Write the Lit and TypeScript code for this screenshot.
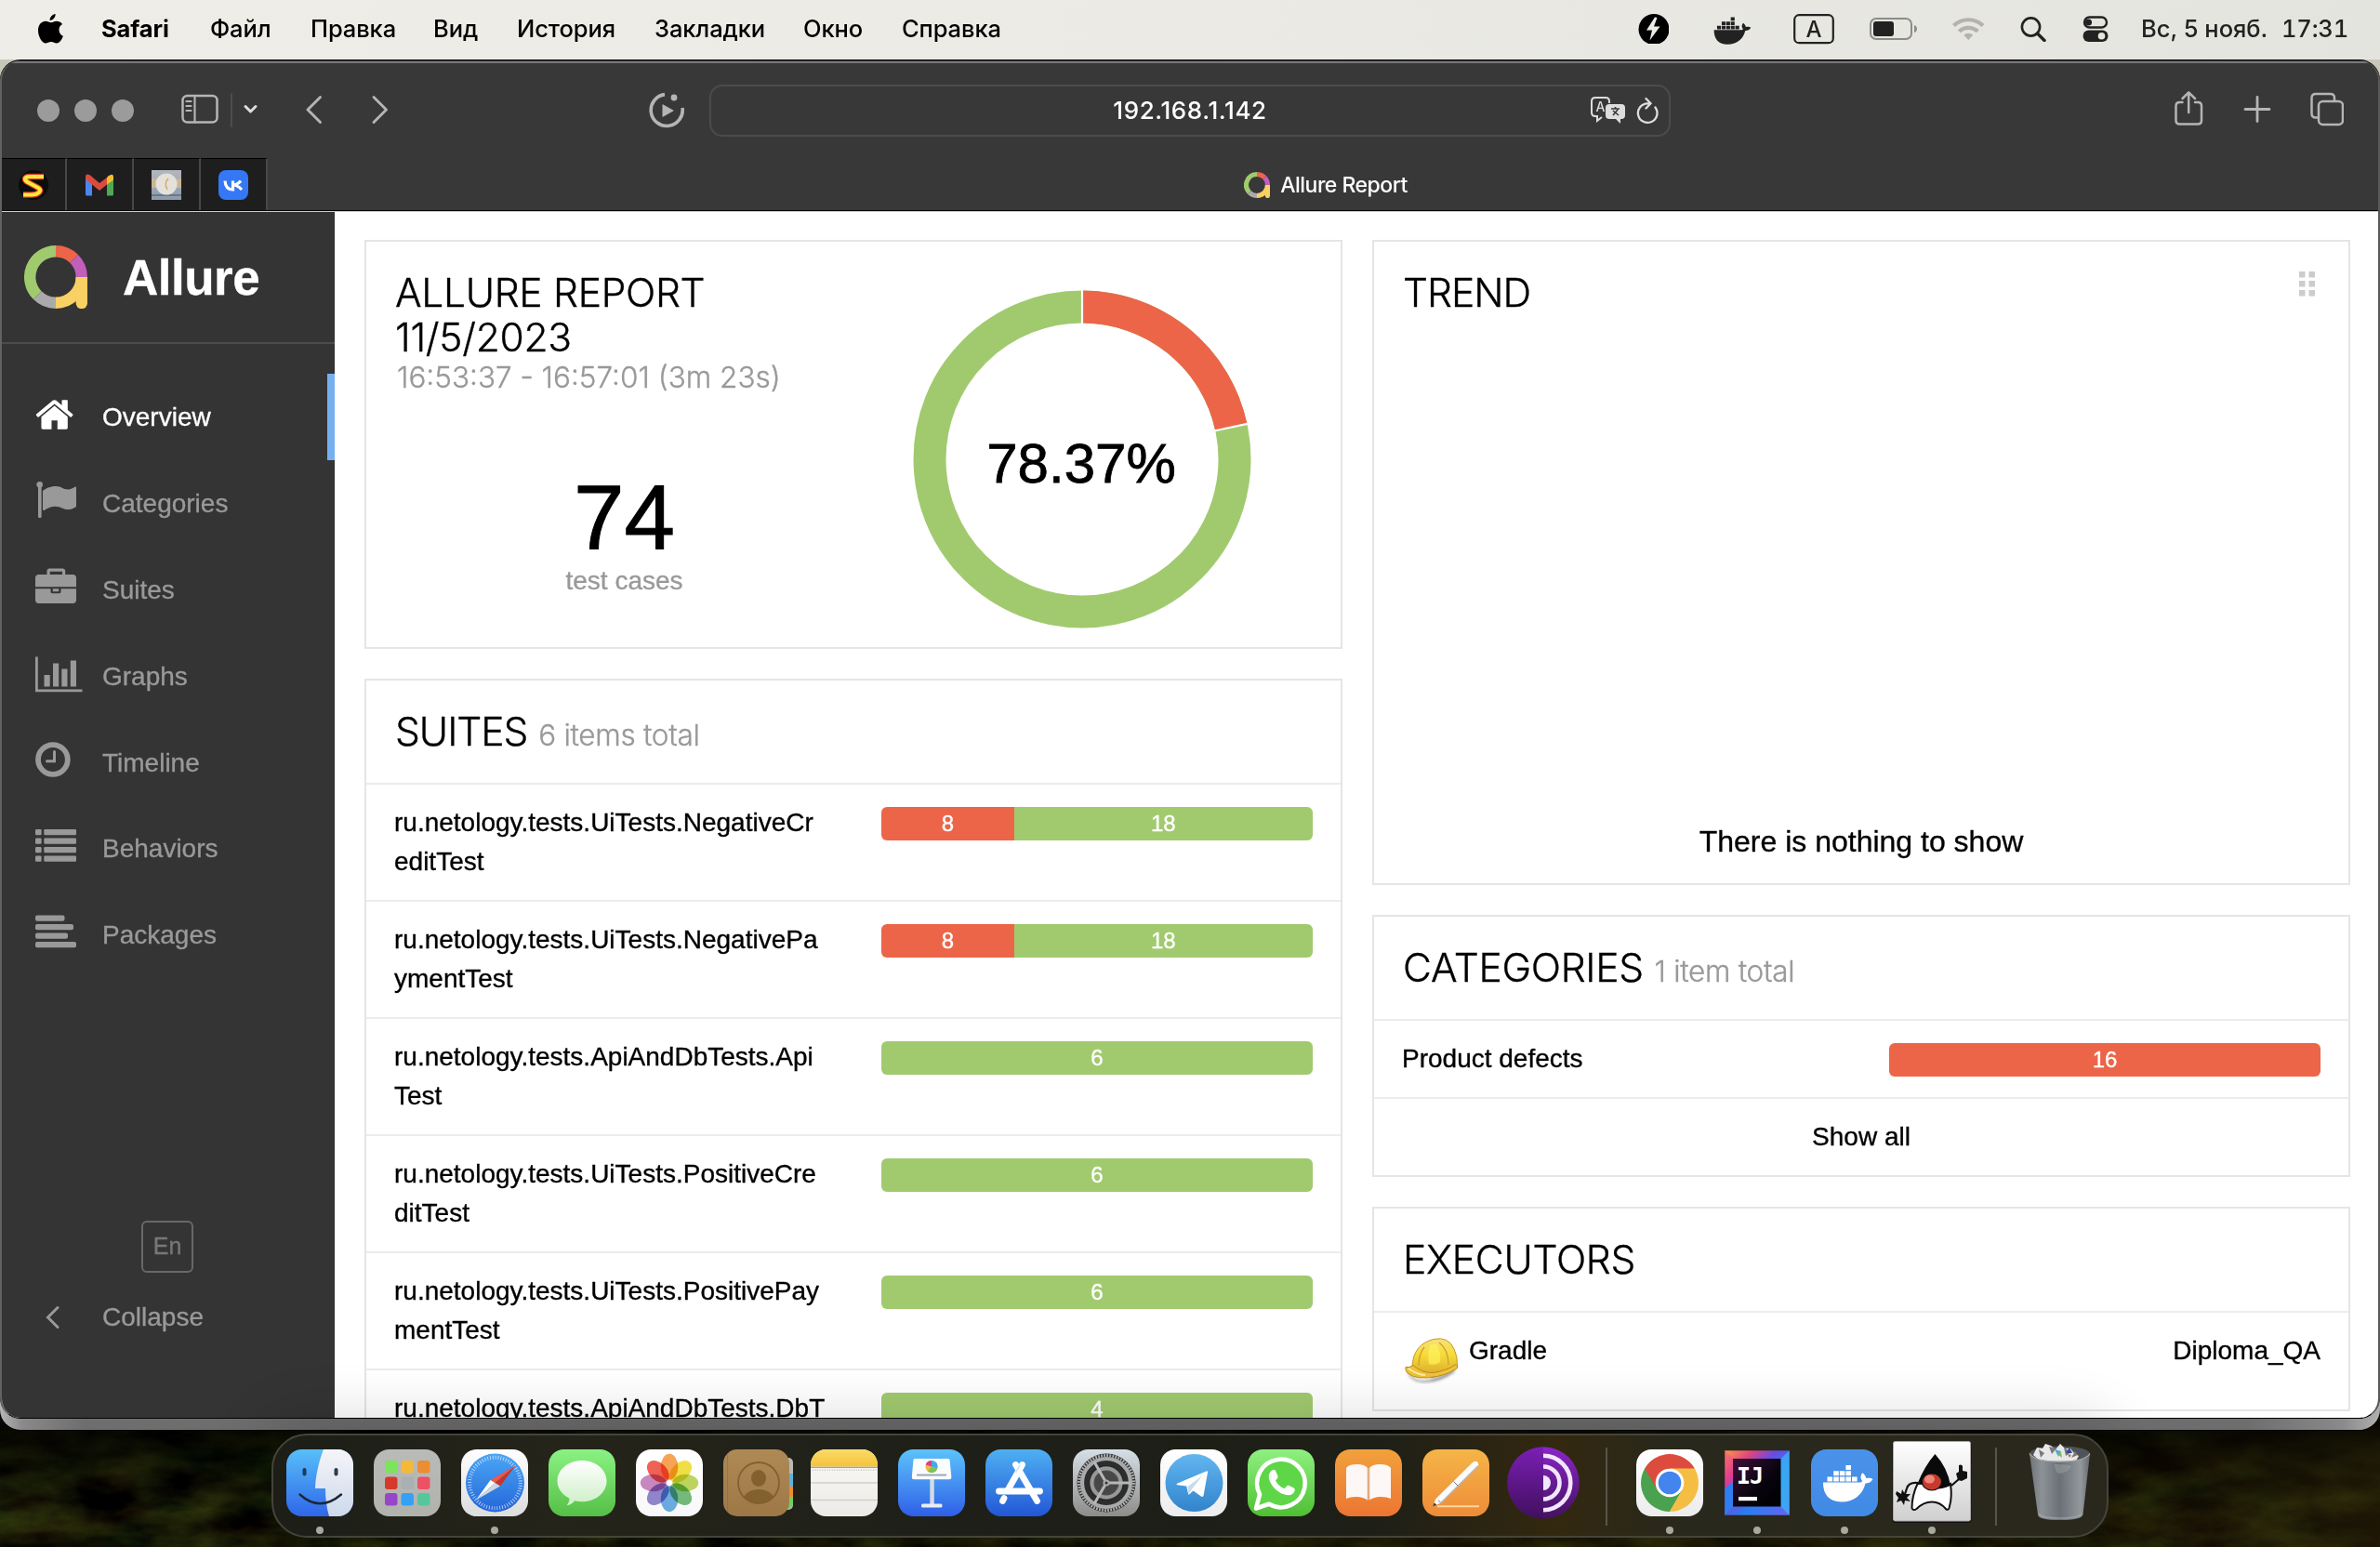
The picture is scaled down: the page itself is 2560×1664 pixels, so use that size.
import { LitElement, html, css, svg, TemplateResult } from "lit";
import { customElement } from "lit/decorators.js";

interface Suite {
  lines: string[];
  failed: number;
  passed: number;
}

const MENU = ["Файл", "Правка", "Вид", "История", "Закладки", "Окно", "Справка"];

const SUITES: Suite[] = [
  { lines: ["ru.netology.tests.UiTests.NegativeCr", "editTest"], failed: 8, passed: 18 },
  { lines: ["ru.netology.tests.UiTests.NegativePa", "ymentTest"], failed: 8, passed: 18 },
  { lines: ["ru.netology.tests.ApiAndDbTests.Api", "Test"], failed: 0, passed: 6 },
  { lines: ["ru.netology.tests.UiTests.PositiveCre", "ditTest"], failed: 0, passed: 6 },
  { lines: ["ru.netology.tests.UiTests.PositivePay", "mentTest"], failed: 0, passed: 6 },
  { lines: ["ru.netology.tests.ApiAndDbTests.DbT"], failed: 0, passed: 4 },
];

const NAV: { label: string; icon: TemplateResult; active?: boolean }[] = [
  {
    label: "Overview",
    active: true,
    icon: svg`<g transform="translate(-1.4 -1) scale(.0246)"><path d="M1472 992v480q0 26-19 45t-45 19h-384v-384h-256v384h-384q-26 0-45-19t-19-45v-480q0-1 .5-3t.5-3l575-474 575 474q1 2 1 6zm223-69l-62 74q-8 9-21 11h-3q-13 0-21-7l-692-577-692 577q-12 8-24 7-13-2-21-11l-62-74q-8-10-7-23.5t11-21.5l719-599q32-26 76-26t76 26l244 204v-195q0-14 9-23t23-9h192q14 0 23 9t9 23v408l219 182q10 8 11 21.5t-7 23.5z"/></g>`,
  },
  {
    label: "Categories",
    icon: svg`<circle cx="4.7" cy="5.2" r="3.3"/><rect x="3" y="6" width="3.6" height="35" rx="1.2"/><path d="M8 12c3-2.500 8-5 14-5 6 0 8 3.500 13 3.500 3 0 5.500-1.600 7.500-2.700 1-.5 1.500 0 1.500.8v19.400c0 1-.4 1.300-1.200 1.700-2.400 1.200-5 2.400-8 2.400-5 0-7.500-3.400-13-3.400-5 0-9 2-12 4-1 .6-1.800.2-1.800-.8z"/>`,
  },
  {
    label: "Suites",
    icon: svg`<path d="M12.500 9V5.200C12.500 3.400 13.700 2.500 15 2.500h14.500c1.500 0 2.700 1 2.700 2.700V9h8.300c2 0 3.500 1.500 3.500 3.500v9.800H0v-9.800C0 10.500 1.500 9 3.500 9zm3.200 0h13.300V5.700H15.700zM0 24.200h16.500v3.300c0 1 .7 1.700 1.700 1.700h7.600c1 0 1.700-.7 1.700-1.700v-3.300H44v12.300c0 2-1.500 3.500-3.500 3.500h-37C1.500 40 0 38.500 0 36.500zm18.800 0h6.400v3h-6.400z"/>`,
  },
  {
    label: "Graphs",
    icon: svg`<path d="M0 4.500h2.800V39.500H50.500v2.700H0zM9.500 24h6.200v12.500H9.500zM19 11.500h6.200v25H19zM28.300 17.500h6.200v19h-6.200zM37.800 8.500H44v28h-6.200z"/>`,
  },
  {
    label: "Timeline",
    icon: svg`<circle cx="18.900" cy="22" r="15.900" fill="none" stroke="currentColor" stroke-width="5.800"/><path d="M20.500 13.500v10.300h-8" fill="none" stroke="currentColor" stroke-width="3" stroke-linecap="round"/>`,
  },
  {
    label: "Behaviors",
    icon: svg`${[4, 13.5, 23, 32.5].map(
      (y) => svg`<rect x="0" y=${y} width="6.600" height="6.300" rx="1.200"/><rect x="9.300" y=${y} width="34.700" height="6.300" rx="1.200"/>`
    )}`,
  },
  {
    label: "Packages",
    icon: svg`${[31.5, 41, 35, 44].map(
      (w, i) => svg`<rect x="0" y=${3.5 + i * 9.5} width=${w} height="6.300" rx="2"/>`
    )}`,
  },
];

const allureLogo = (size: number) => html`
  <svg width=${size} height=${size} viewBox="0 0 68 68" fill="none" stroke-width="12.400">
    <path d="M14.340 53.660A27.800 27.800 0 0 1 34 6.200" stroke="#a1ca6f" />
    <path d="M34 6.200A27.800 27.800 0 0 1 53.660 14.340" stroke="#ec6549" />
    <path d="M53.660 14.340A27.800 27.800 0 0 1 61.800 34" stroke="#c15fb9" />
    <path d="M34 61.800A27.800 27.800 0 0 1 14.340 53.660" stroke="#aaa" />
    <path d="M61.800 34A27.800 27.800 0 0 1 34 61.800" stroke="#f9d063" />
    <path d="M55.600 34H68V62a6.200 6.200 0 0 1-12.400 0z" fill="#f9d063" />
  </svg>
`;

const grad = (id: string, top: string, bottom: string) => svg`
  <linearGradient id=${id} x1="0" y1="0" x2="0" y2="1">
    <stop offset="0" stop-color=${top}/><stop offset="1" stop-color=${bottom}/>
  </linearGradient>`;

const tile = (id: string, top: string, bottom: string) => svg`
  ${grad(id, top, bottom)}<rect width="72" height="72" rx="16.500" fill="url(#${id})"/>`;

const PETALS = ["#f7973c", "#f0dc2c", "#b6d24a", "#63b36a", "#5aa3e0", "#8377c4", "#c379b8", "#ee4c3c"];
const PAD = [
  ["#7be35c", "#f5b93a", "#ec8d33"],
  ["#d6382c", "#a9afb3", "#ee5064"],
  ["#9746c9", "#36a0f5", "#56c69b"],
];

const finder = svg`${tile("fi", "#57bff8", "#2f66ea")}
  <clipPath id="fc"><rect width="72" height="72" rx="16.500"/></clipPath>
  ${grad("fr", "#f5f5f8", "#cdd9ec")}
  <g clip-path="url(#fc)"><path d="M40 0C35 13 31.500 28 31 42h11c0 10 1 20 4 30h26V0z" fill="url(#fr)"/></g>
  <rect x="17.500" y="20" width="4" height="8.500" rx="2" fill="#1c3a5c"/><rect x="51.500" y="20" width="4" height="8.500" rx="2" fill="#2c3a4c"/>
  <path d="M14.500 48.500Q36 68 59 48.500" fill="none" stroke="#1d2733" stroke-width="2.400" stroke-linecap="round"/>`;

const launchpad = svg`${tile("lp", "#b9bbb9", "#b1b2ac")}
  ${PAD.map((r, y) => r.map((c, x) => svg`<rect x=${12 + x * 17.5} y=${12 + y * 17.5} width="13.500" height="13.500" rx="3" fill=${c}/>`))}`;

const safari = svg`${tile("sa", "#ffffff", "#dcdcde")}${grad("sb", "#4ba6f5", "#2466d8")}
  <circle cx="36.500" cy="36" r="31.500" fill="url(#sb)"/>
  <circle cx="36.500" cy="36" r="27.300" fill="none" stroke="#fff" stroke-opacity=".75" stroke-width="4" stroke-dasharray=".8 2.060"/>
  <path d="M58.500 17.500L31.500 33l5 3z" fill="#f0574b"/><path d="M58.500 17.500L42 39.500l-5.500-3.500z" fill="#c5352c"/>
  <path d="M16 54.500L31.500 33l5 3z" fill="#fff"/><path d="M16 54.500L42 39.500l-5.500-3.500z" fill="#cfd6de"/>`;

const messages = svg`${tile("me", "#8af283", "#55bf46")}${grad("mb", "#ffffff", "#cdeec5")}
  <path d="M36 12c15 0 26.500 9.800 26.500 22S51 56.300 36 56.300c-2.800 0-5.500-.3-8-1-1.500 2.700-4.500 4.600-8.500 5 2-2.300 3-5 3-7.500C14.500 48.600 9.500 41.800 9.500 34 9.500 21.800 21 12 36 12z" fill="url(#mb)"/>`;

const photos = svg`${tile("ph", "#ffffff", "#f8f8fa")}
  <g class="petals">${PETALS.map((c, i) => svg`<ellipse cx="36" cy="18.800" rx="9.300" ry="14" fill=${c} fill-opacity=".88" transform="rotate(${i * 45} 36 36)"/>`)}</g>
  <circle cx="36" cy="36" r="1.600" fill="#fff"/>`;

const contacts = svg`<rect x="60" y="9" width="15" height="56" rx="5" fill="#b9b9b5"/><rect x="60" y="26" width="15" height="14" fill="#5eb1dc"/><rect x="60" y="40" width="15" height="11" fill="#ee8c2e"/><path d="M60 51h15v7q-1 5-5 6H60z" fill="#6fd060"/>
  ${grad("co", "#b08a55", "#9d7745")}<rect width="71" height="72" rx="15" fill="url(#co)"/>
  <path d="M4.500 5v62" stroke="#8b6637" stroke-opacity=".5" stroke-width="1"/>
  <circle cx="38" cy="36" r="22" fill="none" stroke="#83602f" stroke-width="1.800"/><ellipse cx="38" cy="31" rx="8" ry="9" fill="#83602f"/>
  <path d="M22 51q5-8 16-8t16 8q-7 7.500-16 7.500T22 51z" fill="#83602f"/>`;

const notes = svg`${tile("no", "#faf9f6", "#ecebe7")}
  <clipPath id="nc"><rect width="72" height="72" rx="16.500"/></clipPath>${grad("ny", "#fbdb6a", "#f4c338")}
  <g clip-path="url(#nc)"><rect width="72" height="18.500" fill="url(#ny)"/><path d="M0 19.300h72" stroke="#a79f8d" stroke-width="1.300"/>
  <path d="M2 22.300h70" stroke="#c3c1bb" stroke-width="1.500" stroke-dasharray="1 1.600"/><path d="M0 36h72M0 54.500h72" stroke="#d0cfcb" stroke-width="1.300"/></g>`;

const keynote = svg`${tile("ke", "#5cc3fb", "#2f5fe8")}
  <path d="M34.300 32h4.500v28h-4.500z" fill="#d5dbe4"/><rect x="25" y="58.500" width="22.500" height="4" rx="1.500" fill="#e9edf3"/>
  <path d="M18 10h36q1.500 0 1.600 1.500l1.800 18.500q0 2.200-2.200 2.200H17q-2.200 0-2.200-2.200l1.600-18.500Q16.500 10 18 10z" fill="#fbfcfe"/>
  <path d="M20 26.600h32v2H20z" fill="#9aa9b9"/>
  <circle cx="36" cy="18.500" r="6.600" fill="#f4b93c"/><path d="M36 18.500V11.900a6.600 6.600 0 0 1 6.300 8.600z" fill="#4aa6ec"/><path d="M36 18.500l6.300 2A6.600 6.600 0 0 1 32 23.800z" fill="#7ac35b"/><path d="M36 18.500V11.900a6.600 6.600 0 0 0-6.300 4.600z" fill="#d64384"/>`;

const appStore = svg`${tile("as", "#4fb0f2", "#2257d6")}
  <g stroke="#fff" stroke-width="6.800" stroke-linecap="round"><path d="M39.500 16.500L24.500 43M20 52.500l-1.500 3"/><path d="M32.500 16.500L55.500 55.500"/><path d="M14.500 45h44"/></g>
  <path d="M37 17l-4.500 8" stroke="#c9dff5" stroke-width="1.500"/>`;

const settings = svg`${tile("se", "#d6dfe7", "#8e8c8a")}
  <circle cx="36" cy="36" r="31.500" fill="#2c2d2e"/><circle cx="36" cy="36" r="29.500" fill="none" stroke="#b0b0b0" stroke-width="3" stroke-dasharray="1.800 1.290"/>
  <circle cx="36" cy="36" r="26" fill="none" stroke="#a9a9a9" stroke-width="4.200"/><circle cx="36" cy="36" r="18.500" fill="#4c4d4d" stroke="#222" stroke-width="1"/>
  <circle cx="36" cy="36" r="15.500" fill="none" stroke="#989898" stroke-width="4"/><circle cx="36" cy="36" r="12" fill="#474747"/>
  <path d="M36 36h26M36 36L23 13.500M36 36L23 58.500" stroke="#b7b7b7" stroke-width="3"/><circle cx="36" cy="36" r="3.600" fill="#aaa"/><circle cx="36" cy="36" r="1.500" fill="#333"/>`;

const telegram = svg`${tile("te", "#ffffff", "#ececee")}${grad("tf", "#63b6f0", "#3184cb")}
  <circle cx="36.500" cy="36" r="31" fill="url(#tf)"/>
  <path d="M18 36.800L49.500 23.400q1.800-.6 1.500 1.600L46.600 49.500q-.6 2.300-2.800 1.100L35.500 44.500 31 48.500q-.8.300-1-.8l-1.800-8.200-9.800-1.200q-1.500-.7-.4-1.500z" fill="#fff"/><path d="M29.500 40L45 28.500 33.500 43.500l-3 5z" fill="#c5dcee"/>`;

const whatsapp = svg`${tile("wh", "#8ff07f", "#4fbf34")}
  <path d="M9 63.500l4-15.200A25.800 25.800 0 1 1 23 58.800z" fill="#5fd647" stroke="#fff" stroke-width="4.600" stroke-linejoin="round"/>
  <path d="M26.300 22.500c1.500-1 3.200-.6 3.900.9l2.200 5c.4 1.200 0 2.200-.8 3.100l-1.600 1.900c2 4 5.300 7 9.600 8.900l2.200-2.600c.8-1 1.700-1.200 2.800-.7l5 2.500c1.200.6 1.400 1.600 1 3-1.200 3.600-4 5-7.500 4.700C33.500 48.200 24.500 40 22.800 30.500c-.4-3.500.8-6 3.500-8z" fill="#fff"/>`;

const books = svg`${tile("bo", "#f2a13c", "#ec7533")}
  <path d="M35 20q-3-4-11.500-4T12 20v33q4-2 11-2t12 3.500zM37 20q3-4 11.500-4T60 20v33q-4-2-11-2t-12 3.500z" fill="#fdf8f5"/>
  <path d="M35 20v34.500M37 20v34.500" stroke="#d8cfc8" stroke-width="1"/>`;

const pages = svg`${tile("pa", "#f5b548", "#ee8c38")}
  <path d="M16 61.200h45" stroke="#fcd5a2" stroke-width="2"/>
  <path d="M59 13.500q2.300 2 .3 5.500L20 57.500 11 61.500l3.500-8.500L53 15q3.600-3.500 6-1.500z" fill="#fbfbfb"/><path d="M59.700 18L20 57.500l-3-2.500" fill="none" stroke="#b8b4b0" stroke-width="1.600"/>
  <path d="M33.500 34.500l4.500 4.500" stroke="#777" stroke-width="1"/><path d="M11 61.500l1.800-4.200 2.400 2.400z" fill="#333"/>`;

const tor = svg`${grad("to", "#8a25c9", "#43125f")}<circle cx="36" cy="36" r="38.800" fill="url(#to)"/>
  <path d="M36 -2.800A38.800 38.800 0 0 0 36 74.800z" fill="#35085a" fill-opacity=".18"/>
  <g fill="none" stroke="#f3e6fb" stroke-width="4.600"><path d="M36 6.700a29.300 29.300 0 0 1 0 58.600M36 18.500a17.500 17.500 0 0 1 0 35"/></g><path d="M36 28a8 8 0 0 1 0 16z" fill="#f3e6fb"/>`;

const chrome = svg`${tile("ch", "#ffffff", "#ececec")}
  <path d="M36 36L9.200 20.500A31 31 0 0 1 62.800 20.500z" fill="#dd4b3e"/><path d="M9.200 20.500A31 31 0 0 0 36 67L49.400 43.700 36 36z" fill="#4aa14f"/>
  <path d="M62.800 20.500A31 31 0 0 1 36 67L49.400 43.700 36 20.500z" fill="#f5bd42"/><path d="M9.200 20.500L22.600 43.700 36 20.500z" fill="#dd4b3e"/>
  <path d="M9.200 20.500L22.600 43.700a15 15 0 0 1 13.400-23.200z" fill="#dd4b3e"/><path d="M9.200 20.500L22.600 43.700 30 50 22 60z" fill="#4aa14f"/>
  <circle cx="36" cy="36" r="15.300" fill="#fff"/><circle cx="36" cy="36" r="12.300" fill="#4384ee"/>`;

const idea = svg`<linearGradient id="ij" x1="0" y1="0" x2="1" y2="1"><stop offset="0" stop-color="#fc9a4c"/><stop offset=".22" stop-color="#e0447e"/><stop offset=".4" stop-color="#6a4be0"/><stop offset=".65" stop-color="#2a7df0"/><stop offset="1" stop-color="#6b62f0"/></linearGradient>
  <linearGradient id="ik" x1="0" y1="0" x2="1" y2="1"><stop offset="0" stop-color="#3c0f3a"/><stop offset=".6" stop-color="#07030c"/><stop offset="1" stop-color="#000"/></linearGradient>
  <rect x="1.300" y="1.300" width="69.400" height="69.400" fill="url(#ij)"/><path d="M70.700 1.300v69.400L61 61V10.500z" fill="#39b7f5" fill-opacity=".75"/><path d="M1.300 1.300v69.400L10.500 61V10.500z" fill="#f0389a" fill-opacity=".35"/><path d="M1.300 70.700L10.500 61v-26L1.300 42z" fill="#2f7df0"/>
  <rect x="10" y="10" width="51.500" height="51.500" fill="url(#ik)"/><rect x="16" y="51" width="20" height="4.200" fill="#fff"/>
  <text x="14" y="36.500" class="ij">IJ</text>`;

const whale = svg`<path d="M17.500 29.500h5.600v5h-5.600zM24.200 29.500h5.600v5h-5.600zM30.800 29.500h5.600v5h-5.600zM37.400 29.500H43v5h-5.600zM44 29.500h5.600v5H44zM24.200 23.300h5.600v5h-5.600zM30.800 23.300h5.600v5h-5.600zM37.400 23.300H43v5h-5.600zM37.400 17H43v5h-5.600z"/>
  <path d="M13 35.600h38.500c2 0 3.200-.6 3.800-1.400-2.500-2.600-2.300-6.600.2-9 2 1.500 3.500 3.600 3.700 5.900 2.500-.6 5.600-.4 7.300.9-1.600 3-4.500 4.500-8 4.500C55.500 49 46 56.500 32.500 56.500 20 56.500 12.800 49 13 35.600z"/>`;

const docker = svg`${tile("do", "#4a92e9", "#418ae5")}<g fill="#fff">${whale}</g>`;

const duke = svg`${grad("du", "#ffffff", "#cfcfcf")}
  <rect x="-6.500" y="-7" width="85" height="86" rx="3" fill="#111"/><rect x="-5.500" y="-8.500" width="83" height="85.500" rx="2" fill="url(#du)" stroke="#aaa" stroke-width="1"/>
  <path d="M21 36q-10-1-12 6l-3 9M57 39l8-7" fill="none" stroke="#111" stroke-width="2.200"/>
  <path d="M-2 45l5 3 1-5 3 5 6 0-4 4 4 4-6-1-1 5-3-5-5 2 2-5-3-4z" fill="#111"/>
  <path d="M64 33l-2-7 3-2 0-7q3-1.500 4 1v5l5 1 0 7-6 3z" fill="#111"/>
  <path d="M20.500 37Q26 36 36 40t20-3q2 14-1 24-.5 5-3.500 3.500Q45 56.500 36 56.500T19.500 64q-4 2.500-5-1 0-13 6-26z" fill="#fff" stroke="#111" stroke-width="2"/>
  <path d="M39.400 5Q28 18 20 38q14-3 18 3 6 2 18-2Q53 20 39.400 5z" fill="#0a0a0a"/>
  <ellipse cx="36" cy="35" rx="10.500" ry="9" fill="#c63a2e" stroke="#111" stroke-width="1.200"/><ellipse cx="33.500" cy="32" rx="5.500" ry="4.500" fill="#ee8577"/>`;

const trash = svg`<linearGradient id="tr" x1="0" x2="1" y1="0" y2="0"><stop offset="0" stop-color="#6f7479"/><stop offset=".2" stop-color="#8d9297"/><stop offset=".5" stop-color="#6a7076"/><stop offset=".85" stop-color="#93989c"/><stop offset="1" stop-color="#63686c"/></linearGradient>
  <ellipse cx="35.500" cy="4.500" rx="32.500" ry="8" fill="#4f5458"/>
  <path d="M7 6l4-8 6 1 3-5 6 2 5 4 5-6 5 5 6 0 4 5 5 3-3 5-12 4H18z" fill="#e8e8e8"/>
  <path d="M13 0l6 4-4 5zM24-3l3 8 5-6zM40-2l2 9 6-4zM52 2l-4 7 7-3z" fill="#77797c"/><path d="M30 0l7 2-3 6z" fill="#4aa7dc"/><path d="M42 4l4-6 3 6z" fill="#2a4f9c"/><path d="M33 5l4-2 1 6z" fill="#7fbf4a"/><path d="M44 5l4 1-2 3z" fill="#c8703a"/>
  <path d="M3 4.500Q8 13 35.500 13T68 4.500L60.500 70q-1.500 6-25 6T12 70z" fill="url(#tr)"/>
  <path d="M30 16q16 0 18 2-4 8-14 8-4-4-4-10z" fill="#a2a7ab" fill-opacity=".45"/><path d="M3 4.500Q8 13 35.500 13T68 4.500" fill="none" stroke="#a9adb1" stroke-width="1.300"/>
  <path d="M13 69q3 5 22.500 5T59.500 69" fill="none" stroke="#abb0b4" stroke-opacity=".6" stroke-width="1.500"/>`;

type DockItem = { icon: TemplateResult; running?: boolean };
const APPS: DockItem[] = [
  { icon: finder, running: true },
  { icon: launchpad },
  { icon: safari, running: true },
  { icon: messages },
  { icon: photos },
  { icon: contacts },
  { icon: notes },
  { icon: keynote },
  { icon: appStore },
  { icon: settings },
  { icon: telegram },
  { icon: whatsapp },
  { icon: books },
  { icon: pages },
  { icon: tor },
];
const OPEN_APPS: DockItem[] = [
  { icon: chrome, running: true },
  { icon: idea, running: true },
  { icon: docker, running: true },
  { icon: duke, running: true },
];

@customElement("app-root")
export class AppRoot extends LitElement {
  static styles = css`
    :host {
      display: block;
      position: relative;
      width: 2560px;
      height: 1664px;
      overflow: hidden;
      font-family: "Liberation Sans", Arial, sans-serif;
      background: linear-gradient(#c9c7ba 0, #c9c7ba 110px, #070804 200px, #070804 100%);
    }
    * { box-sizing: border-box; }
    svg { display: block; flex: none; }
    .wallpaper { position: absolute; left: 0; top: 1490px; }
    .back {
      position: absolute; left: 0; top: 1440px; width: 2560px; height: 98px;
      border-radius: 0 0 22px 22px;
      background: linear-gradient(90deg, #b5b5b5 0, #8a8a8a 24px, #6e6e6e 90px, #696969 50%, #6e6e6e 2420px, #8a8a8a 2520px, #b0b0b0 2560px);
      box-shadow: 0 1px 0 #000;
    }
    .desk { position: relative; display: flex; flex-direction: column; height: 1664px; }

    .menubar {
      height: 64px; flex: none; display: flex; align-items: center; padding: 0 34px 2px 41px;
      background: linear-gradient(90deg, #efede7, #ebeae5 50%, #e4e4de);
      font: 500 25.500px/32px Inter, sans-serif; color: #000;
    }
    .menus { display: grid; grid-template-columns: 117px 108px 132px 90px 148px 160px 106px auto; margin-left: 41px; flex: 1; font-weight: 450; letter-spacing: -.1px; }
    .menus b { font-weight: 700; }
    .tray { display: flex; align-items: center; color: #222; font-weight: 450; }
    .clock { margin-left: 35px; width: 223px; display: flex; justify-content: space-between; white-space: nowrap; }
    .time { font-variant-numeric: tabular-nums; letter-spacing: -.2px; }

    .window {
      position: relative; margin-top: 1px; height: 1461px; flex: none; display: flex; flex-direction: column;
      border-radius: 22px; overflow: hidden; background: #383838;
      border-left: 2px solid #626262; border-right: 2px solid #5a5a5a; border-bottom: 1px solid #000;
      box-shadow: 0 -1px 0 #000;
    }
    .window::before { content: ""; height: 2px; flex: none; background: #77767a; margin-top: 1px; }
    .toolbar { height: 102px; flex: none; display: flex; align-items: center; color: #b5b5b5; }
    .lights { display: flex; gap: 16px; margin-left: 38px; }
    .light { width: 24px; height: 24px; border-radius: 50%; background: #9b9b9b; }
    .url {
      width: 1034px; height: 56px; margin-left: 27px; border: 2px solid #4b4b4b; border-radius: 14px;
      display: grid; grid-template-columns: 1fr auto 1fr; align-items: center; color: #fff;
      font: 450 26px/30px Inter, sans-serif;
    }
    .urltext { grid-column: 2; letter-spacing: .6px; }
    .urlicons { display: flex; justify-content: flex-end; padding-right: 11px; gap: 11px; color: #ddd; }
    .tabs { height: 57px; flex: none; display: flex; border-bottom: 1px solid #000; }
    .pin {
      width: 72px; background: #1e1e1e; border-right: 2px solid #484848; border-top: 1px solid #000;
      display: flex; align-items: center; justify-content: center;
    }
    .pin:first-child { width: 70px; }
    .tab { flex: 1; display: flex; align-items: center; justify-content: center; gap: 11px; color: #fff; font: 500 23px/30px Inter, sans-serif; letter-spacing: -.5px; padding: 1px 0 0 6px; }

    .page { flex: 1; min-height: 0; display: flex; background: #fff; border-top: 1px solid #ccc; }
    .side { width: 358px; flex: none; background: #343434; color: #999; display: flex; flex-direction: column; font-size: 28px; -webkit-text-stroke: .35px currentColor; }
    .brand { height: 142px; flex: none; border-bottom: 2px solid #4c4c4c; display: flex; align-items: flex-start; padding: 36px 0 0 24px; }
    .brand span { font-weight: 700; font-size: 53px; line-height: 69px; color: #fff; margin-left: 38px; letter-spacing: -.5px; }
    .nav { padding-top: 32px; flex: 1; }
    .item { height: 92.900px; display: flex; align-items: center; padding-left: 36px; }
    .item span { padding-top: 1px; }
    .item svg { width: 52px; height: 46px; margin-right: 20px; overflow: visible; position: relative; top: -2px; }
    .item.on { color: #fff; border-right: 8px solid #76b0ef; }
    .item.on svg { top: -.5px; }
    .lang { width: 56px; height: 56px; border: 2px solid #686868; border-radius: 6px; margin: 0 0 0 150px; font-size: 25px; line-height: 50px; text-align: center; color: #777; }
    .collapse { display: flex; align-items: center; padding: 0 0 0 47px; height: 95px; margin-bottom: 61px; }
    .collapse svg { margin-right: 46px; }

    .main { flex: 1; display: grid; grid-template-columns: 1052px 1052px; gap: 32px; padding: 30px 0 0 32px; align-items: start; overflow: hidden; }
    .col { display: flex; flex-direction: column; gap: 32px; }
    .card { border: 2px solid #e5e5e5; background: #fff; font-size: 28px; line-height: 42px; color: #000; -webkit-text-stroke: .35px currentColor; }
    .title { font: 300 42.500px/48px Inter, sans-serif; letter-spacing: -1px; }
    .wide { letter-spacing: -.3px; }
    .muted { font: 300 31.500px/38px Inter, sans-serif; letter-spacing: -.2px; color: #999; }
    .head { height: 112px; padding: 31px 32px 0 31px; border-bottom: 2px solid #ececec; }
    .head .muted { margin-left: 4px; letter-spacing: -.3px; }
    .summary { height: 440px; display: flex; }
    .info { flex: 1; padding: 31px 0 0 31px; }
    .info .muted { padding-left: 2px; letter-spacing: 0; }
    .total { width: 493px; text-align: center; color: #999; line-height: 36px; margin-top: 81px; }
    .num { font-size: 98px; line-height: 101px; color: #000; -webkit-text-stroke: 1px #000; }
    .donut { width: 364px; margin: 52px 96px 0 0; }
    .pct { font: 60px "Liberation Sans", Arial, sans-serif; stroke: #000; stroke-width: .8px; -webkit-text-stroke: .8px #000; }
    .row { display: flex; justify-content: space-between; padding: 20px 30px; border-bottom: 2px solid #ececec; }
    .row:last-child { border-bottom: 0; }
    .bar { width: 464px; height: 36px; margin-top: 4px; display: flex; border-radius: 6px; overflow: hidden; color: #fff; font-size: 24px; line-height: 36px; text-align: center; }
    .bad { background: #ec6549; }
    .ok { background: #a1ca6f; }
    .trend { height: 694px; display: flex; flex-direction: column; justify-content: space-between; }
    .trendhead { display: flex; justify-content: space-between; padding: 31px 36px 0 31px; }
    .empty { text-align: center; font-size: 32px; line-height: 48px; padding-bottom: 21px; }
    .all { text-align: center; padding: 20px 0; }
    .exec { height: 104px; display: flex; padding: 20px 30px 0 32px; }
    .exec .name { flex: 1; margin-left: 10px; }
    .exec svg { margin-top: 6px; }

    .dock {
      align-self: center; margin-top: 16px; width: 1976px; height: 112px; flex: none; display: flex; padding: 5px 0 0 3px;
      border: 2px solid #45443a; border-radius: 38px; position: relative;
      background: linear-gradient(90deg, #1c1e17, #25241a 15%, #1d1f18 40%, #1e1f17 60%, #33280f 70%, #29281c 76%, #2a281c);
      box-shadow: 0 -6px 60px 12px rgba(0, 0, 0, .15);
    }
    .app { width: 94px; display: flex; flex-direction: column; align-items: center; }
    .app svg { overflow: visible; }
    .dot { width: 8px; height: 8px; border-radius: 50%; background: #aaa79c; margin-top: 3px; }
    .sep { width: 42px; display: flex; justify-content: center; padding-top: 8px; }
    .sep::before { content: ""; width: 2px; height: 84px; background: #56554b; }
    .sep.last { width: 44px; }
    .petals ellipse { mix-blend-mode: multiply; }
    .ij { font: 700 25px "DejaVu Sans Mono", monospace; fill: #fff; letter-spacing: -1px; }
    .boxed { font: 500 24px Inter, sans-serif; fill: currentColor; }
    .tiny { font: 500 14px Inter, sans-serif; fill: currentColor; }
  `;

  private menubar() {
    return html`
      <header class="menubar">
        <svg width="27" height="32" viewBox="0 0 27 32">
          <path d="M18.600 0c.2 3.800-3 7-6 7C12.300 3.600 15.500.4 18.600 0zM22.500 17c0-3 1.700-4.800 3.600-6-1.500-2.200-4-3.300-6.200-3.300-2.600 0-4.300 1.500-5.900 1.500-1.700 0-3.600-1.500-5.900-1.500C4 7.700 0 11.300 0 17.700 0 24.500 4.400 31.500 8 31.500c2.200 0 3.200-1.400 6-1.400s3.500 1.400 6 1.400c3 0 5.700-4.200 6.900-7.700-2.800-1.200-4.400-3.700-4.400-6.800z" />
        </svg>
        <nav class="menus"><b>Safari</b>${MENU.map((m) => html`<span>${m}</span>`)}</nav>
        <div class="tray">
          <svg width="34" height="32" viewBox="0 0 34 32"><circle cx="18" cy="16.500" r="16.500" fill="#000"/><path d="M19 3.500L10 17.500h6L13.500 28.500 24.500 13.500h-6.500L21.500 4z" fill="#eeece6"/></svg>
          <svg width="134" height="34" viewBox="0 0 134 34" fill="currentColor">
            <g transform="translate(39 -8) scale(.74)">${whale}</g>
          </svg>
          <svg width="44" height="34" viewBox="0 0 44 34"><rect x="1.200" y="2.200" width="41.600" height="30" rx="5" fill="none" stroke="currentColor" stroke-width="2.200"/><text class="boxed" x="22" y="26" text-anchor="middle">A</text></svg>
          <svg width="90" height="26" viewBox="0 0 90 26"><rect x="39" y="2" width="44" height="22" rx="6" fill="none" stroke="#8d8d88" stroke-width="2"/><rect x="42" y="5" width="22" height="16" rx="3" fill="#222"/><path d="M86 9q3 1 3 4t-3 4z" fill="#8d8d88"/></svg>
          <svg width="72" height="28" viewBox="0 0 72 28" fill="none" stroke="#b3b2ad" stroke-width="4.200"><path d="M38.500 10.500a23 23 0 0 1 31.500 0M44.300 16.800a14.500 14.500 0 0 1 20 0"/><path d="M54.300 26l-5-5.200a7 7 0 0 1 10 0z" fill="#b3b2ad" stroke="none"/></svg>
          <svg width="66" height="28" viewBox="0 0 66 28" fill="none" stroke="#222" stroke-width="2.600"><circle cx="49.500" cy="12" r="9.600"/><path d="M56.500 19l7.500 7.500" stroke-width="3.400" stroke-linecap="round"/></svg>
          <svg width="67" height="28" viewBox="0 0 67 28"><rect x="41" y="1.500" width="24" height="11" rx="5.500" fill="none" stroke="#222" stroke-width="2.400"/><circle cx="45.500" cy="7" r="3.600" fill="#222"/><rect x="39.500" y="15.500" width="27" height="12.500" rx="6.200" fill="#222"/><circle cx="59.500" cy="21.700" r="3.800" fill="#e6e6e0"/></svg>
          <div class="clock"><span>Вс, 5 нояб.</span><span class="time">17:31</span></div>
        </div>
      </header>
    `;
  }

  private toolbar() {
    return html`
      <div class="toolbar">
        <div class="lights"><i class="light"></i><i class="light"></i><i class="light"></i></div>
        <svg width="554" height="44" viewBox="0 0 554 44" fill="none" stroke="currentColor" stroke-width="2.500" stroke-linecap="round" stroke-linejoin="round">
          <rect x="52.500" y="6" width="37" height="28.500" rx="5"/><path d="M65.500 6v28.500M56.500 12h5M56.500 17h5M56.500 22h5" stroke-width="2.200"/>
          <path d="M105 4v35" stroke="#4d4d4d" stroke-width="2"/><path d="M120 17.500l5.500 5.500 5.500-5.500" stroke="#ddd" stroke-width="3"/>
          <path d="M200.500 7.500L187 21l13.500 13.500M258 7.500L271.500 21 258 34.500" stroke-width="2.900"/>
        </svg>
        <svg width="38" height="40" viewBox="0 0 38 40" fill="none" stroke="currentColor" stroke-width="3.600"><path d="M17 2.600A17 17 0 1 0 36 17" /><path d="M14.500 13v14L27 20z" fill="currentColor" stroke="none"/><circle cx="27" cy="6" r="3.400" fill="currentColor" stroke="none"/></svg>
        <div class="url">
          <span class="urltext">192.168.1.142</span>
          <div class="urlicons">
            <svg width="38" height="30" viewBox="0 0 38 30"><path d="M12 22l-5 4v-5H5q-4 0-4-4V5q0-4 4-4h11q4 0 4 4v2" fill="none" stroke="currentColor" stroke-width="2"/><text class="tiny" x="5.500" y="15.500">A</text><path d="M20 8h13q4 0 4 4v8q0 4-4 4h-1v5l-5-5h-7q-4 0-4-4v-8q0-4 4-4z" fill="currentColor"/><path d="M22 13h9M26.500 11v2M24 20l5-6M24 15l6 5" stroke="#383838" stroke-width="1.600"/></svg>
            <svg width="24" height="30" viewBox="0 0 24 30" fill="none" stroke="currentColor" stroke-width="2.300" stroke-linecap="round"><path d="M20.500 11.500A10.300 10.300 0 1 1 12 7.300h2.500M10.500 2l5 5.200-5 5.300"/></svg>
          </div>
        </div>
        <svg width="724" height="44" viewBox="0 0 724 44" fill="none" stroke="currentColor" stroke-width="2.500" stroke-linecap="round" stroke-linejoin="round">
          <path d="M550.500 13h-3q-4 0-4 4v15.500q0 4 4 4h19.500q4 0 4-4V17q0-4-4-4h-3M557.200 24V3M550.500 9l6.700-6.700L564 9"/>
          <path d="M618 20.500h26M631 7.500v26" stroke-width="2.800"/>
          <path d="M696 29.500h-2q-4.500 0-4.500-4.500V8.500Q689.500 4 694 4h15.500q4.500 0 4.500 4.500V11"/><rect x="697" y="12" width="26" height="25" rx="4.500"/>
        </svg>
      </div>
      <div class="tabs">
        <div class="pin"><svg width="34" height="34" viewBox="0 0 34 34"><circle cx="17" cy="17" r="16" fill="#0c0c0c"/><path d="M28 8H13q-5 0-5 2.500 0 2 3 3.500l11 6q4 2.500 1 5t-8 2.500H6" fill="none" stroke="#d8382a" stroke-width="6.400"/><path d="M28 8H13q-5 0-5 2.500 0 2 3 3.500l11 6q4 2.500 1 5t-8 2.500H6" fill="none" stroke="#fbe83c" stroke-width="4.200"/></svg></div>
        <div class="pin"><svg width="30" height="24" viewBox="0 0 30 24"><path d="M0 3v19q0 1.500 1.500 1.500H7V9z" fill="#4b87ee"/><path d="M30 3v19q0 1.500-1.500 1.500H23V9z" fill="#4fa854"/><path d="M23 4l1.500-1.800Q30-1.500 30 3.500v3l-7 5z" fill="#f5bd30"/><path d="M0 3.500Q0-1.500 5 1.500L15 10l8-6v7.500L15 18 7 11.500 0 6z" fill="#dd4b3f"/></svg></div>
        <div class="pin"><svg width="32" height="32" viewBox="0 0 32 32">${grad("ab", "#b4b8bd", "#8d9aaa")}<rect width="32" height="32" fill="url(#ab)"/><rect y="9" width="32" height="10" fill="#c9b596"/><path d="M0 27h32" stroke="#66798e" stroke-width="2"/><circle cx="16" cy="15" r="11.500" fill="#e4e1da"/><path d="M18 9q-5 5-1 12" fill="none" stroke="#dba65d" stroke-width="1.500"/></svg></div>
        <div class="pin"><svg width="32" height="32" viewBox="0 0 32 32"><rect width="32" height="32" rx="8" fill="#3478f6"/><path d="M7 11.500q.5 9.500 8.500 9.500V11.500M16 16q5-.5 8-4.500M16 16q5.500.5 9 5" fill="none" stroke="#fff" stroke-width="3.200"/></svg></div>
        <div class="tab">${allureLogo(28)}<span>Allure Report</span></div>
      </div>
    `;
  }

  private sidebar() {
    return html`
      <aside class="side">
        <div class="brand">${allureLogo(68)}<span>Allure</span></div>
        <nav class="nav">
          ${NAV.map(
            (n) => html`<div class="item ${n.active ? "on" : ""}">
              <svg viewBox="0 0 52 46" fill="currentColor">${n.icon}</svg><span>${n.label}</span>
            </div>`
          )}
        </nav>
        <div class="lang">En</div>
        <div class="collapse">
          <svg width="15" height="26" viewBox="0 0 15 26" fill="none" stroke="currentColor" stroke-width="3" stroke-linecap="round"><path d="M13 2.500L2.500 13 13 23.500"/></svg>
          <span>Collapse</span>
        </div>
      </aside>
    `;
  }

  private bar(failed: number, passed: number) {
    const share = (n: number) => `width:${(n / (failed + passed)) * 100}%`;
    return html`<div class="bar">
      ${failed ? html`<div class="bad" style=${share(failed)}>${failed}</div>` : null}
      ${passed ? html`<div class="ok" style=${share(passed)}>${passed}</div>` : null}
    </div>`;
  }

  private donut(ratio: number) {
    const at = (r: number, share: number) => {
      const a = share * 2 * Math.PI;
      return `${(182 + r * Math.sin(a)).toFixed(2)} ${(182 - r * Math.cos(a)).toFixed(2)}`;
    };
    const fail = 1 - ratio;
    return html`
      <svg class="donut" width="364" height="364" viewBox="0 0 364 364">
        <circle cx="182" cy="182" r="164" fill="none" stroke="#a1ca6f" stroke-width="35" />
        <path d="M${at(164, 0)}A164 164 0 0 1 ${at(164, fail)}" fill="none" stroke="#ec6549" stroke-width="35" />
        <path d="M${at(144, 0)}L${at(184, 0)}M${at(144, fail)}L${at(184, fail)}" stroke="#fff" stroke-width="2.200" />
        <text class="pct" x="181" y="207" text-anchor="middle">78.37%</text>
      </svg>
    `;
  }

  private content() {
    return html`
      <main class="main">
        <div class="col">
          <section class="card summary">
            <div class="info">
              <div class="title wide">ALLURE REPORT<br />11/5/2023</div>
              <div class="muted">16:53:37 - 16:57:01 (3m 23s)</div>
              <div class="total"><div class="num">74</div>test cases</div>
            </div>
            ${this.donut(0.7837)}
          </section>
          <section class="card">
            <div class="head"><span class="title">SUITES</span> <span class="muted">6 items total</span></div>
            ${SUITES.map(
              (s) => html`<div class="row">
                <div>${s.lines.map((line) => html`<div>${line}</div>`)}</div>
                ${this.bar(s.failed, s.passed)}
              </div>`
            )}
          </section>
        </div>
        <div class="col">
          <section class="card trend">
            <div class="trendhead">
              <span class="title">TREND</span>
              <svg width="17" height="30" viewBox="0 0 17 30" fill="#ccc">
                <path d="M0 1h6.500v6.500H0zM10.500 1H17v6.500h-6.500zM0 11h6.500v6.500H0zM10.500 11H17v6.500h-6.500zM0 21h6.500v6.500H0zM10.500 21H17v6.500h-6.500z" />
              </svg>
            </div>
            <div class="empty">There is nothing to show</div>
          </section>
          <section class="card">
            <div class="head"><span class="title wide">CATEGORIES</span> <span class="muted">1 item total</span></div>
            <div class="row"><div>Product defects</div>${this.bar(16, 0)}</div>
            <div class="all">Show all</div>
          </section>
          <section class="card">
            <div class="head"><span class="title wide">EXECUTORS</span></div>
            <div class="exec">
              <svg width="60" height="54" viewBox="0 0 60 54">
                <linearGradient id="hg" x1="0" y1="0" x2="0" y2="1"><stop offset="0" stop-color="#f7e07a"/><stop offset=".4" stop-color="#f6dc3c"/><stop offset="1" stop-color="#d9a628"/></linearGradient>
                <filter id="hb"><feGaussianBlur stdDeviation="1.800"/></filter>
                <path d="M4 38q10 12 24 8 18-5 28-14l-2 6Q38 50 20 49 6 47 4 38z" fill="#555" fill-opacity=".6" filter="url(#hb)"/>
                <path d="M9 32Q10 8 32 2.500 48-1 54 13q4 8 3.500 18Q46 40 30 44z" fill="url(#hg)" stroke="#c79a2a" stroke-width="1"/>
                <path d="M2 32.500q4 1 8-2 10 9 22 8 14-2 24-9 2 1 1.500 4-8 6-22 9Q14 47 4 39 1 35 2 32.500z" fill="#efc23a" stroke="#b98c22" stroke-width="1"/>
                <path d="M5 34q10 7 18 7" fill="none" stroke="#fdf0a8" stroke-width="1.800"/>
                <path d="M22 11q-6 8-6 20M38 6q10 8 10 24" fill="none" stroke="#d5a226" stroke-width="1.400"/>
                <path d="M28 9q7-4 9 2 3 8 2 16-6 4-12 2-2-10 1-20z" fill="#fff25c" fill-opacity=".7"/>
              </svg>
              <span class="name">Gradle</span><span>Diploma_QA</span>
            </div>
          </section>
        </div>
      </main>
    `;
  }

  private dockItem(item: DockItem) {
    return html`<div class="app">
      <svg width="94" height="90" viewBox="-11 -10 94 90">${item.icon}</svg>
      ${item.running ? html`<i class="dot"></i>` : null}
    </div>`;
  }

  render() {
    return html`
      <svg class="wallpaper" width="2560" height="174" viewBox="0 0 2560 174">
        <filter id="leaf" x="0" y="0" width="100%" height="100%" color-interpolation-filters="sRGB"><feTurbulence type="fractalNoise" baseFrequency=".012 .03" numOctaves="6" seed="8"/><feColorMatrix values=".3 .1 0 0 -.12  .38 0 0 0 -.1  .08 0 0 0 -.02  0 0 0 0 1"/></filter>
        <linearGradient id="warm"><stop offset=".3" stop-color="#3a2206" stop-opacity="0"/><stop offset=".68" stop-color="#3a2a08" stop-opacity=".35"/><stop offset=".88" stop-color="#2c2208" stop-opacity=".25"/><stop offset="1" stop-color="#3a2c0a" stop-opacity=".5"/></linearGradient>
        <linearGradient id="fall" x1="0" x2="0" y1="0" y2="1"><stop offset=".25" stop-color="#000" stop-opacity=".7"/><stop offset=".7" stop-color="#000" stop-opacity="0"/></linearGradient>
        <rect width="2560" height="174" filter="url(#leaf)"/><rect width="2560" height="174" fill="url(#warm)"/><rect width="2560" height="174" fill="url(#fall)"/>
      </svg>
      <div class="back"></div>
      <div class="desk">
        ${this.menubar()}
        <div class="window">
          ${this.toolbar()}
          <div class="page">${this.sidebar()}${this.content()}</div>
        </div>
        <div class="dock">
          ${APPS.map((a) => this.dockItem(a))}
          <div class="sep"></div>
          ${OPEN_APPS.map((a) => this.dockItem(a))}
          <div class="sep last"></div>
          ${this.dockItem({ icon: trash })}
        </div>
      </div>
    `;
  }
}
